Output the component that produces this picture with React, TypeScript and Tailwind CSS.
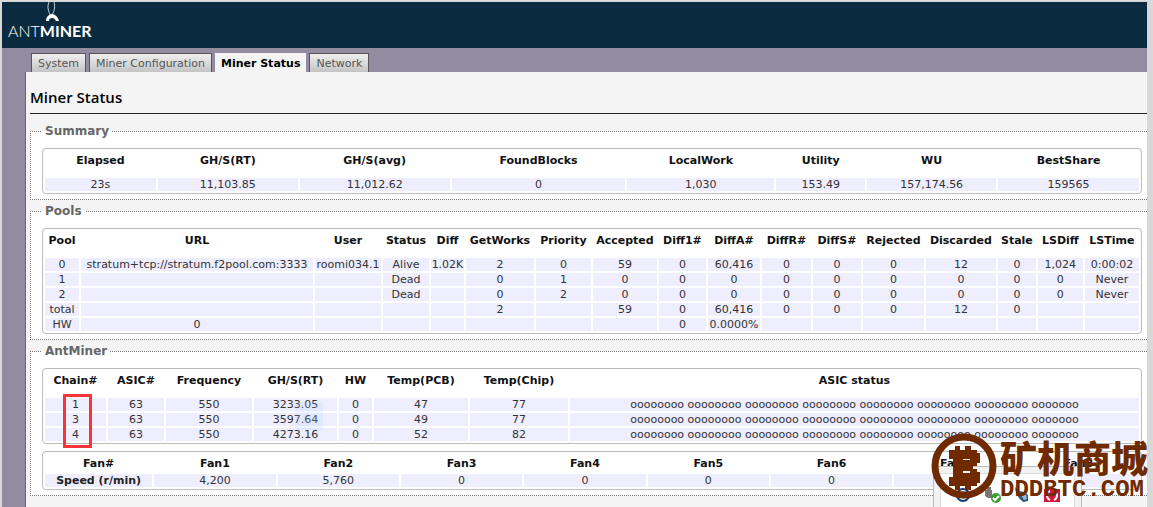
import React from "react";

interface Column {
  label: string;
  size: number;
}

interface DataTableProps {
  columns: Column[];
  rows: string[][];
  compact?: boolean;
}

const tabs = ["System", "Miner Configuration", "Miner Status", "Network"];

const summaryColumns: Column[] = [
  { label: "Elapsed", size: 111 },
  { label: "GH/S(RT)", size: 140 },
  { label: "GH/S(avg)", size: 150 },
  { label: "FoundBlocks", size: 174 },
  { label: "LocalWork", size: 147 },
  { label: "Utility", size: 89 },
  { label: "WU", size: 129 },
  { label: "BestShare", size: 141 },
];

const summaryRows = [
  ["23s", "11,103.85", "11,012.62", "0", "1,030", "153.49", "157,174.56", "159565"],
];

const poolColumns: Column[] = [
  { label: "Pool", size: 34 },
  { label: "URL", size: 232 },
  { label: "User", size: 66 },
  { label: "Status", size: 46 },
  { label: "Diff", size: 33 },
  { label: "GetWorks", size: 68 },
  { label: "Priority", size: 55 },
  { label: "Accepted", size: 64 },
  { label: "Diff1#", size: 47 },
  { label: "DiffA#", size: 52 },
  { label: "DiffR#", size: 49 },
  { label: "DiffS#", size: 48 },
  { label: "Rejected", size: 61 },
  { label: "Discarded", size: 70 },
  { label: "Stale", size: 38 },
  { label: "LSDiff", size: 45 },
  { label: "LSTime", size: 54 },
];

const poolRows = [
  ["0", "stratum+tcp://stratum.f2pool.com:3333", "roomi034.1", "Alive", "1.02K", "2", "0", "59", "0", "60,416", "0", "0", "0", "12", "0", "1,024", "0:00:02"],
  ["1", "", "", "Dead", "", "0", "1", "0", "0", "0", "0", "0", "0", "0", "0", "0", "Never"],
  ["2", "", "", "Dead", "", "0", "2", "0", "0", "0", "0", "0", "0", "0", "0", "0", "Never"],
  ["total", "", "", "", "", "2", "", "59", "0", "60,416", "0", "0", "0", "12", "0", "", ""],
  ["HW", "0", "", "", "", "", "", "", "0", "0.0000%", "", "", "", "", "", "", ""],
];

const chainColumns: Column[] = [
  { label: "Chain#", size: 61 },
  { label: "ASIC#", size: 56 },
  { label: "Frequency", size: 86 },
  { label: "GH/S(RT)", size: 83 },
  { label: "HW", size: 33 },
  { label: "Temp(PCB)", size: 94 },
  { label: "Temp(Chip)", size: 98 },
  { label: "ASIC status", size: 569 },
];

const asicStatus =
  "oooooooo oooooooo oooooooo oooooooo oooooooo oooooooo oooooooo ooooooo";

const chainRows = [
  ["1", "63", "550", "3233.05", "0", "47", "77", asicStatus],
  ["3", "63", "550", "3597.64", "0", "49", "77", asicStatus],
  ["4", "63", "550", "4273.16", "0", "52", "82", asicStatus],
];

const fanColumns: Column[] = [
  { label: "Fan#", size: 107 },
  { label: "Fan1", size: 121 },
  { label: "Fan2", size: 121 },
  { label: "Fan3", size: 121 },
  { label: "Fan4", size: 121 },
  { label: "Fan5", size: 121 },
  { label: "Fan6", size: 121 },
  { label: "Fan7", size: 121 },
  { label: "Fan8", size: 121 },
];

const fanRows = [["Speed (r/min)", "4,200", "5,760", "0", "0", "0", "0", "0", "0"]];

const DataTable: React.FC<DataTableProps> = ({ columns, rows, compact }) => {
  const total = columns.reduce((sum, column) => sum + column.size, 0);

  return (
    <table className="w-full table-fixed border-separate border-spacing-[2px] rounded border border-[#bbb] bg-white text-center text-[11px] leading-[13px] whitespace-nowrap text-[#333]">
      <colgroup>
        {columns.map((column) => (
          <col
            key={column.label}
            style={{ width: `${(column.size / total) * 100}%` }}
          />
        ))}
      </colgroup>
      <thead>
        <tr>
          {columns.map((column) => (
            <th
              key={column.label}
              scope="col"
              className={`px-0 pt-[3px] font-bold text-[#111] ${
                compact ? "pb-[2px]" : "pb-[9px]"
              }`}
            >
              {column.label}
            </th>
          ))}
        </tr>
      </thead>
      <tbody>
        {rows.map((row) => (
          <tr key={row[0]}>
            {row.map((cell, index) =>
              compact && index === 0 ? (
                <th
                  key={index}
                  scope="row"
                  className="h-[13px] bg-[#eef] p-0 font-bold text-[#222]"
                >
                  {cell}
                </th>
              ) : (
                <td key={index} className="h-[13px] bg-[#eef] p-0">
                  {cell}
                </td>
              )
            )}
          </tr>
        ))}
      </tbody>
    </table>
  );
};

const Section: React.FC<{ title: string; children: React.ReactNode }> = ({
  title,
  children,
}) => (
  <fieldset className="min-w-0 border border-r-0 border-dotted border-[#777] bg-white pt-[9px] pr-[5px] pb-[5px] pl-[11px]">
    <legend className="px-[3px] text-[12px] leading-[15px] font-bold text-[#666]">
      {title}
    </legend>
    {children}
  </fieldset>
);

const Logo: React.FC = () => (
  <a
    href="#"
    aria-label="AntMiner"
    className="flex flex-col text-[16px] leading-[18px] text-white"
  >
    <svg viewBox="0 0 16 20" className="ml-[37px] h-5 w-4" aria-hidden="true">
      <path
        d="M4 0C2 5 3 9 6 14M9 0c1 4 1 8-2 13"
        fill="none"
        stroke="#cfd5dc"
        strokeWidth="1"
      />
      <path
        d="M1 19c0-4 3-7 6-7s6 3 7 7h-3c-1-2-2-3-4-3s-3 1-3 3z"
        fill="#fff"
      />
    </svg>
    <span className="font-['Lato',sans-serif] font-light">
      ANT<span className="font-bold">MINER</span>
    </span>
  </a>
);

const TrayPopup: React.FC = () => (
  <div className="absolute right-[71px] bottom-0 h-[41px] w-[149px] rounded-t-sm border border-b-0 border-[#bbb] bg-[#f2f2f2] px-[6px] pt-[6px]">
    <div className="flex h-full items-start justify-between border border-b-0 border-[#ddd] bg-white px-[14px] pt-[13px]">
      <svg viewBox="0 0 16 16" className="h-4 w-4" aria-hidden="true">
        <circle cx="8" cy="8" r="6" fill="#fff" stroke="#15387a" strokeWidth="2" />
        <path d="M8 4l3 4-3 4-3-4z" fill="#15387a" />
      </svg>
      <svg viewBox="0 0 16 16" className="h-4 w-4" aria-hidden="true">
        <path d="M2 0v3H0v6l3 2h4V3H6V0z" fill="#777" />
        <circle cx="11" cy="11" r="5" fill="#3d9b35" />
        <path d="M8 11l2 2 4-4" fill="none" stroke="#fff" strokeWidth="2" />
      </svg>
      <svg viewBox="0 0 16 16" className="h-4 w-4" aria-hidden="true">
        <path d="M1 0l4 4 5 1 4 3v6l-5 1-4-4-3-5z" fill="#34566e" />
        <path d="M7 8l5-1 1 5-3 1z" fill="#8dbbe0" />
      </svg>
      <svg viewBox="0 0 16 16" className="h-4 w-4" aria-hidden="true">
        <path d="M0 2h16v13H0z" fill="#d4143a" />
        <path
          d="M6 4c-4 2-4 7 0 9M10 4c4 2 4 7 0 9"
          fill="none"
          stroke="#fff"
          strokeWidth="2"
        />
      </svg>
    </div>
  </div>
);

const Watermark: React.FC = () => (
  <div className="pointer-events-none absolute right-[6px] bottom-[8px] flex items-center gap-[3px] whitespace-nowrap text-[#702a00]">
    <svg viewBox="0 0 66 66" className="h-[66px] w-[66px]" aria-hidden="true">
      <circle cx="33" cy="33" r="29" fill="none" stroke="#702a00" strokeWidth="7" />
      <path
        d="M24 13h5v4h5v-4h6v4h6v3h3v10h-3v3h-4v3h4v3h3v11h-3v3h-6v4h-6v-4h-5v4h-5v-4h-6v-9h4V26h-4v-9h6z"
        fill="#702a00"
      />
      <path d="M32 26h7v1h-7zM32 38h7v2h-7z" fill="#f4f0ee" />
    </svg>
    <div className="flex w-[147px] flex-col">
      <span className="font-['Noto_Sans_CJK_SC',sans-serif] text-[37px] leading-[48px] font-black">
        矿机商城
      </span>
      <span className="font-['Liberation_Mono',monospace] text-[24px] leading-[18px] font-bold">
        DDDBTC.COM
      </span>
    </div>
  </div>
);

const App: React.FC = () => {
  return (
    <div className="relative flex min-h-screen flex-col overflow-hidden bg-[#d8d8d8] pt-[2px] pr-[6px] pl-[2px] font-['DejaVu_Sans',Verdana,sans-serif]">
      <header className="h-[46px] bg-[#0a2b3f] pl-[6px]">
        <Logo />
      </header>

      <div className="flex flex-1 flex-col bg-[#918ca0] pl-[23px]">
        <nav className="flex h-6 items-end gap-[3px] pl-[6px] text-[11px] leading-[13px]">
          {tabs.map((tab) =>
            tab === "Miner Status" ? (
              <a
                key={tab}
                href="#"
                aria-current="page"
                className="h-[19px] bg-[#f4f4f4] px-[6px] pt-[4px] font-bold text-black"
              >
                {tab}
              </a>
            ) : (
              <a
                key={tab}
                href="#"
                className="h-[19px] border border-b-0 border-[#555] bg-linear-to-b from-[#f0f0f0] to-[#c4c4c4] px-[6px] pt-[3px] text-[#555]"
              >
                {tab}
              </a>
            )
          )}
        </nav>

        <main className="flex-1 border-l border-[#666] bg-[#f4f4f4] pl-[4px]">
          <h1 className="mb-[10px] border-b border-[#222] pt-[14px] pb-[5px] font-['Open_Sans',sans-serif] text-[15px] leading-[22px] font-semibold text-black">
            Miner Status
          </h1>

          <div className="flex flex-col gap-1">
            <Section title="Summary">
              <DataTable columns={summaryColumns} rows={summaryRows} />
            </Section>

            <Section title="Pools">
              <DataTable columns={poolColumns} rows={poolRows} />
            </Section>

            <Section title="AntMiner">
              <div className="relative mb-[7px]">
                <DataTable columns={chainColumns} rows={chainRows} />
                <div className="absolute top-[34px] left-[253px] h-7 w-7 rounded bg-[#a8d4ff]/20" />
                <div className="absolute top-[26px] left-[21px] h-[54px] w-[29px] border-3 border-[#f83438]" />
              </div>
              <DataTable columns={fanColumns} rows={fanRows} compact />
            </Section>
          </div>
        </main>
      </div>

      <TrayPopup />
      <Watermark />
    </div>
  );
};

export default App;
